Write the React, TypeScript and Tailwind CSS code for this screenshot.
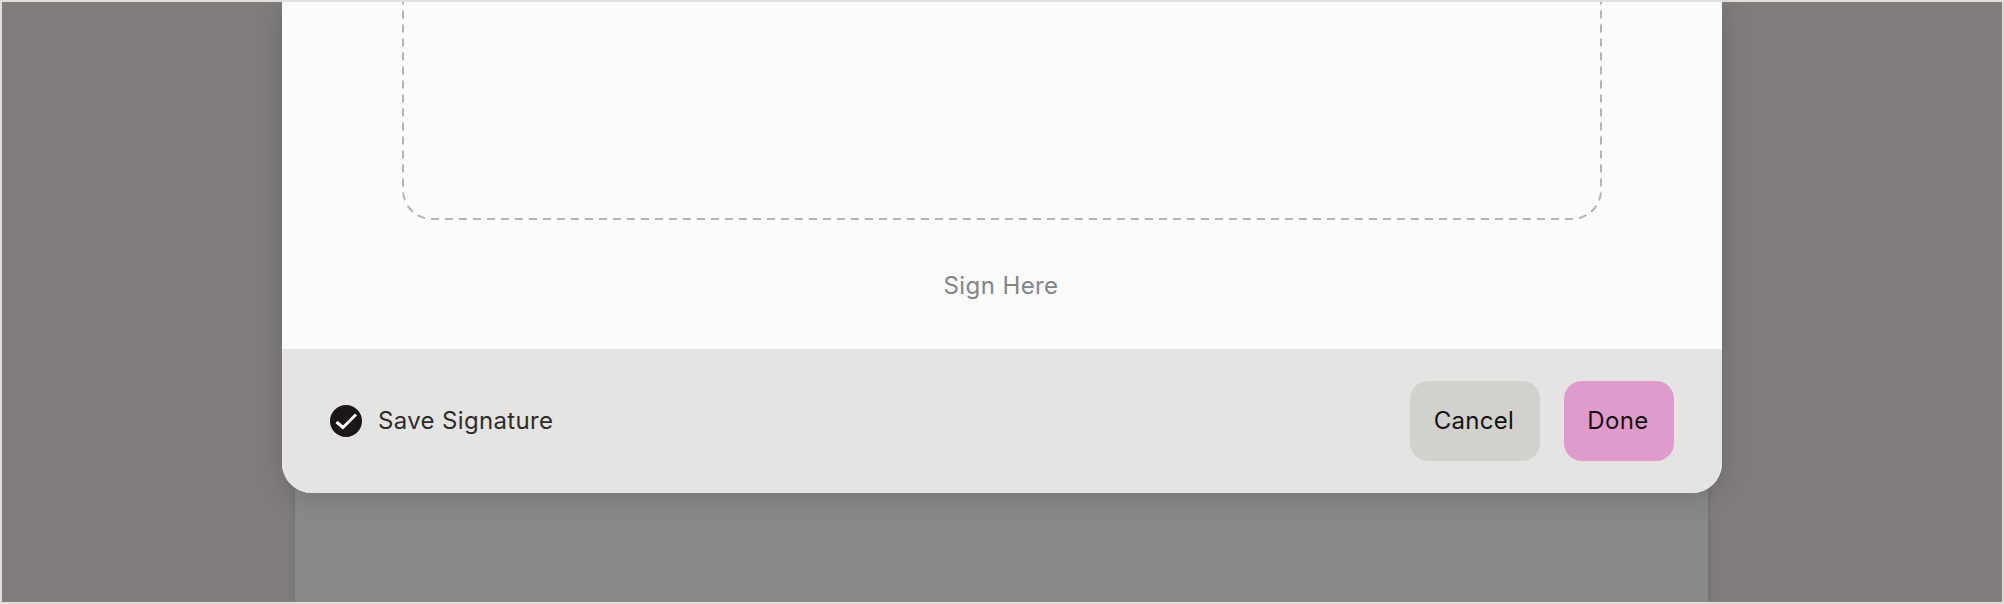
const font = { fontFamily: 'Inter, "Liberation Sans", sans-serif' };

export default function App() {
  return (
    <div style={font} className="relative h-[604px] w-[2004px] overflow-hidden border-2 border-[#e2dfdb] bg-[#807c7b]">
      {/* sheet behind the dialog */}
      <div className="absolute top-0 bottom-0 left-[293px] w-[1413px] bg-[#8a8987] shadow-[0_0_6px_rgba(0,0,0,0.12)]" />

      <div className="relative ml-[280px] w-[1440px] rounded-b-[30px] bg-[#fbfbfb] shadow-[0_4px_28px_rgba(0,0,0,0.16)]">
        <div className="flex h-[346.5px] flex-col items-center overflow-hidden">
          <div className="relative -mt-[40px] ml-[-1px] h-[258px] w-[1200px] shrink-0">
            <svg className="absolute inset-0" width="1200" height="258">
              <rect x="1" y="1" width="1198" height="256" rx="29" fill="none" stroke="#b6b4af" strokeWidth="2" strokeDasharray="8 6" />
            </svg>
          </div>
          <p className="mt-[52px] mr-[2px] text-[24px] leading-[28px] tracking-[0.4px] text-[#858587]">Sign Here</p>
        </div>
        <div className="flex h-[144px] items-center justify-between rounded-b-[30px] bg-[#e5e4e2] pr-[48px] pl-[48px]">
          <div className="flex items-center gap-[16px]">
            <svg width="32" height="32" viewBox="0 0 32 32">
              <circle cx="16" cy="16" r="16" fill="#1a1716" />
              <path d="M6.5 17 L13 22.5 L26 9.5" fill="none" stroke="#fff" strokeWidth="3" />
            </svg>
            <span className="text-[24px] leading-[28px] tracking-[0.35px] text-[#2e2b2a]">Save Signature</span>
          </div>
          <div className="flex gap-[24px]">
            <button className="h-[80px] w-[130px] rounded-[18px] bg-[#d2d1cd] pr-[2px] text-[24px] tracking-[0.3px] text-[#141211]">Cancel</button>
            <button className="h-[80px] w-[110px] rounded-[18px] bg-[#e09bcd] pr-[2px] text-[24px] tracking-[0.4px] text-[#141211]">Done</button>
          </div>
        </div>
      </div>
    </div>
  );
}
